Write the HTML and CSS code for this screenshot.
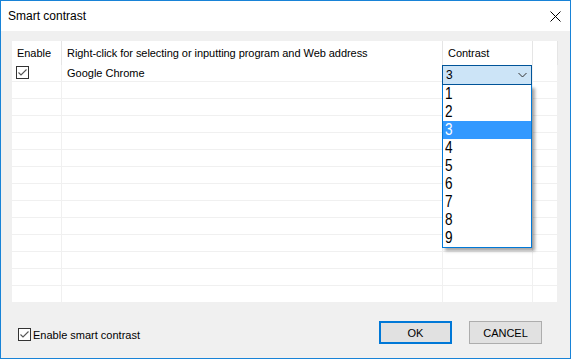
FILE: index.html
```html
<!DOCTYPE html>
<html lang="en">
<head>
  <meta charset="UTF-8">
  <title>Smart contrast</title>
  <link rel="stylesheet" href="styles.css">
</head>
<body>

  <div class="ventana">
    <div class="titulo">
      <span>Smart contrast</span>
      <svg class="cerrar" width="11" height="11" viewBox="0 0 11 11">
        <path d="M0.5 0.5 L10.5 10.5 M10.5 0.5 L0.5 10.5" stroke="#000" stroke-width="1" fill="none"/>
      </svg>
    </div>

    <div class="contenido">
      <div class="tabla" id="tabla">
        <div class="cabecera">
          <div class="celda">Enable</div>
          <div class="celda">Right-click for selecting or inputting program and Web address</div>
          <div class="celda">Contrast</div>
          <div class="celda"></div>
        </div>
        <div class="fila">
          <div class="celda">
            <svg class="check" width="13" height="13" viewBox="0 0 13 13">
              <rect x="0.5" y="0.5" width="12" height="12" fill="#fff" stroke="#333"/>
              <path d="M2.5 6.5 L5 9 L10.5 3.5" stroke="#555" stroke-width="1.1" fill="none"/>
            </svg>
          </div>
          <div class="celda">Google Chrome</div>
          <div class="celda"></div>
          <div class="celda"></div>
        </div>

        <div class="combo">
          <span>3</span>
          <svg width="9" height="6" viewBox="0 0 9 6">
            <path d="M0.5 1 L4.5 5 L8.5 1" stroke="#333" stroke-width="1" fill="none"/>
          </svg>
        </div>
        <ul class="lista">
          <li><span>1</span></li>
          <li><span>2</span></li>
          <li class="activo"><span>3</span></li>
          <li><span>4</span></li>
          <li><span>5</span></li>
          <li><span>6</span></li>
          <li><span>7</span></li>
          <li><span>8</span></li>
          <li><span>9</span></li>
        </ul>
      </div>
    </div>

    <div class="pie">
      <label class="opcion">
        <svg class="check" width="13" height="13" viewBox="0 0 13 13">
          <rect x="0.5" y="0.5" width="12" height="12" fill="#fff" stroke="#333"/>
          <path d="M2.5 6.5 L5 9 L10.5 3.5" stroke="#555" stroke-width="1.1" fill="none"/>
        </svg>
        Enable smart contrast
      </label>
      <div class="botones">
        <button class="principal">OK</button>
        <button>CANCEL</button>
      </div>
    </div>
  </div>

  <script>
    // filas vacías de la tabla
    const tabla = document.getElementById("tabla");
    const combo = tabla.querySelector(".combo");
    for (let i = 0; i < 13; i++) {
      const fila = document.createElement("div");
      fila.className = "fila";
      fila.innerHTML = "<div class='celda'></div><div class='celda'></div><div class='celda'></div><div class='celda'></div>";
      tabla.insertBefore(fila, combo);
    }
  </script>

</body>
</html>
```

FILE: styles.css
```css
body {
  margin: 0;
  font-family: "Liberation Sans", Arial, sans-serif;
  font-size: 11px;
  color: #000;
}

.ventana {
  width: 571px;
  height: 359px;
  box-sizing: border-box;
  border: 1px solid #1883d7;
  background-color: #f0f0f0;
  display: flex;
  flex-direction: column;
}

.titulo {
  height: 30px;
  background-color: #fff;
  display: flex;
  align-items: center;
  justify-content: space-between;
  padding: 0 9px 0 7px;
  flex-shrink: 0;
}

.titulo span {
  font-size: 12px;
}

.contenido {
  padding: 10px 12px 0 11px;
}

.tabla {
  position: relative;
  height: 262px;
  overflow: hidden;
  background-color: #fff;
}

.cabecera,
.fila {
  display: grid;
  grid-template-columns: 50px 381px 90px 25px;
}

.cabecera {
  height: 24px;
}

.cabecera .celda {
  border-right: 1px solid #e5e5e5;
  padding-left: 5px;
  line-height: 24px;
  white-space: nowrap;
  letter-spacing: -0.05px;
}

.fila {
  height: 17px;
}

.fila .celda {
  border-right: 1px solid #f0f0f0;
  border-bottom: 1px solid #f0f0f0;
  padding-left: 5px;
  line-height: 16px;
}

.fila .celda:first-child {
  padding-left: 4px;
}

.fila .check {
  display: block;
  margin-top: 1px;
}

.combo {
  position: absolute;
  left: 430px;
  top: 24px;
  width: 90px;
  height: 20px;
  box-sizing: border-box;
  border: 1px solid #005499;
  background-color: #cce4f7;
  display: flex;
  align-items: center;
  justify-content: space-between;
  padding: 0 4px 0 3px;
  font-size: 12px;
}

.lista {
  position: absolute;
  left: 430px;
  top: 44px;
  width: 90px;
  box-sizing: border-box;
  margin: 0;
  padding: 0;
  list-style: none;
  background-color: #fff;
  border: 1px solid #0078d7;
  border-top: none;
  box-shadow: 3px 3px 3px rgba(0, 0, 0, 0.35);
}

.lista li {
  height: 18px;
  line-height: 18px;
  padding-left: 2px;
  font-family: "Liberation Sans Narrow", "Liberation Sans", sans-serif;
  font-size: 17px;
  font-weight: 300;
  overflow: hidden;
}

.lista li span {
  display: inline-block;
  transform: scaleX(0.8);
  transform-origin: left center;
}

.lista li.activo {
  background-color: #3399ff;
  color: #fff;
}

.pie {
  flex: 1;
  display: flex;
  justify-content: space-between;
  align-items: flex-start;
  padding: 18px 28px 0 17px;
}

.opcion {
  display: flex;
  align-items: center;
  gap: 2px;
  margin-top: 7px;
}

.botones {
  display: flex;
  gap: 17px;
}

.botones button {
  width: 73px;
  height: 23px;
  box-sizing: border-box;
  background-color: #e1e1e1;
  border: 1px solid #adadad;
  font-family: "Liberation Sans", Arial, sans-serif;
  font-size: 11px;
  color: #000;
  padding: 0;
}

.botones button.principal {
  border: 2px solid #0078d7;
}
```
